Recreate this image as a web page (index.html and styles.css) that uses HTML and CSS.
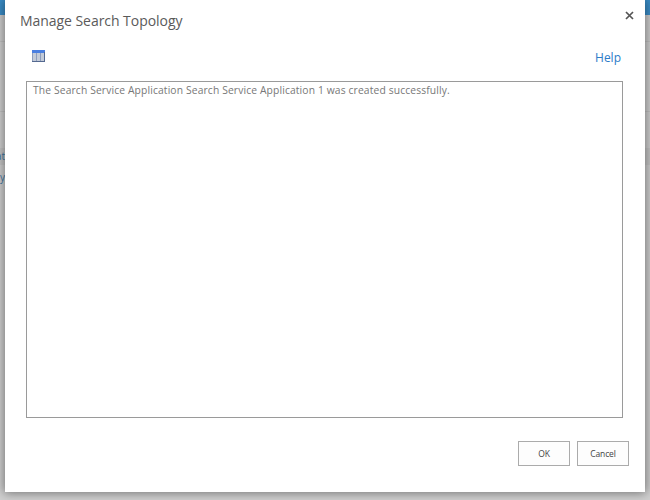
FILE: index.html
```html
<!DOCTYPE html>
<html lang="en">
<head>
  <meta charset="UTF-8">
  <title>Manage Search Topology</title>
  <link rel="stylesheet" href="styles.css">
</head>
<body>

<div class="page">
  <div class="suite-bar"></div>
  <div class="ribbon"></div>
  <div class="row row-tabs"></div>
  <div class="row row-head"></div>
  <div class="row row-item"><span class="bg-link">at</span></div>
  <div class="row row-last"><span class="bg-link">y</span></div>
</div>

<div class="dialog">
  <div class="dialog-head">
    <h1 class="dialog-title">Manage Search Topology</h1>
    <svg class="close" viewBox="0 0 9 9">
      <path d="M1 1L8 8M8 1L1 8" stroke="#555" stroke-width="1.7" fill="none"/>
    </svg>
  </div>

  <div class="toolbar">
    <svg class="columns-icon" viewBox="0 0 13 12">
      <rect width="13" height="12" fill="#8d9dbd"/>
      <rect width="13" height="3" fill="#4a7fe0"/>
      <rect x="1" y="3" width="3" height="8" fill="#c3cbd8"/>
      <rect x="5" y="3" width="3" height="8" fill="#c3cbd8"/>
      <rect x="9" y="3" width="3" height="8" fill="#c3cbd8"/>
      <path d="M12.5 2V12M0 11.5H13" stroke="#546990"/>
    </svg>
    <a class="help">Help</a>
  </div>

  <div class="message"><span class="message-text">The Search Service Application Search Service Application 1 was created successfully.</span></div>

  <div class="buttons">
    <button class="btn">OK</button>
    <button class="btn">Cancel</button>
  </div>
</div>

</body>
</html>
```
FILE: styles.css
```css
* {
  box-sizing: border-box;
}

body {
  margin: 0;
  height: 500px;
  overflow: hidden;
  position: relative;
  background: #d0d0d0;
  font-family: "Open Sans", "Noto Sans", sans-serif;
}

/* dimmed page behind the dialog */
.page {
  height: 500px;
  background: #d0d0d0;
}

.suite-bar {
  height: 15px;
  background: #3b8fca;
}

.ribbon {
  height: 27px;
  background: #cecece;
  border-bottom: 1px solid #c2c2c2;
}

.row {
  overflow: hidden;
}

.row-tabs {
  height: 70px;
  border-bottom: 1px solid #c2c2c2;
}

.row-head {
  height: 36px;
}

.row-item {
  height: 17px;
  background: #c6c6c6;
}

.row-last {
  height: 26px;
  padding-top: 4px;
}

.bg-link {
  display: flex;
  justify-content: flex-end;
  width: 5px;
  font-size: 10px;
  line-height: 17px;
  color: #4177a3;
}

/* dialog lies over the page */
.dialog {
  position: absolute;
  top: 0;
  left: 5px;
  width: 640px;
  height: 492px;
  padding: 0 22px 0 21px;
  background: #fff;
  box-shadow: 0 0 10px 1px rgba(0, 0, 0, 0.45);
}

.dialog-head {
  display: flex;
  justify-content: space-between;
  height: 42px;
  margin: 0 -11px 0 -6px;
}

.dialog-title {
  margin: 0;
  padding-top: 11px;
  font-size: 14px;
  line-height: 20px;
  font-weight: 400;
  letter-spacing: -0.05px;
  color: #5a5a5a;
}

.close {
  width: 9px;
  height: 9px;
  margin-top: 11px;
}

.toolbar {
  display: flex;
  justify-content: space-between;
  height: 39px;
  padding: 0 2px 0 6px;
}

.columns-icon {
  width: 13px;
  height: 12px;
  margin-top: 8px;
}

.help {
  margin-top: 7px;
  font-size: 12px;
  line-height: 18px;
  color: #2c7cc8;
}

.message {
  height: 337px;
  padding: 0 6px;
  border: 1px solid #9a9a9a;
  font-size: 10.3px;
  line-height: 17px;
  letter-spacing: 0.13px;
  color: #777;
}

.message-text {
  white-space: nowrap;
}

.buttons {
  display: flex;
  justify-content: flex-end;
  gap: 7px;
  margin: 23px -6px 0 0;
}

.btn {
  width: 52px;
  height: 25px;
  padding: 0;
  border: 1px solid #ababab;
  background: #fdfdfd;
  font-family: inherit;
  font-size: 8.5px;
  letter-spacing: -0.1px;
  color: #444;
}
```
